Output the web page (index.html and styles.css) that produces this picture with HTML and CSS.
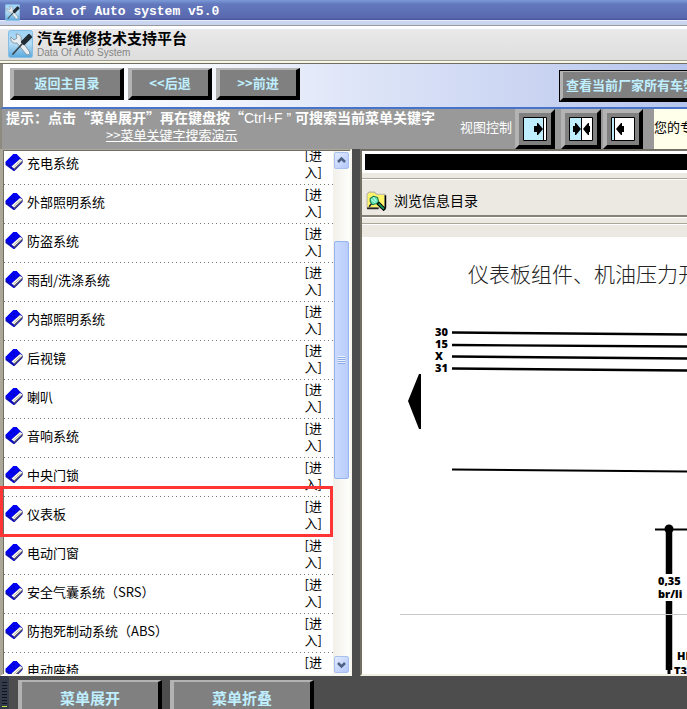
FILE: index.html
```
<!DOCTYPE html>
<html lang="zh-CN">
<head>
<meta charset="utf-8">
<title>Data of Auto system v5.0</title>
<link rel="stylesheet" href="styles.css">
</head>
<body>
<svg class="defs" aria-hidden="true">
  <defs>
    <linearGradient id="sky" x2="0" y2="1"><stop offset="0" stop-color="#9ed2f7"/><stop offset=".5" stop-color="#b5dcf5"/><stop offset="1" stop-color="#56a8de"/></linearGradient>
    <symbol id="tools" viewBox="0 0 25 28">
      <rect x=".5" y=".5" width="24" height="27" rx="2" fill="url(#sky)" stroke="#86bde2"/>
      <path d="M3 7l3 3 3-2-1-4c4 0 6 3 5 6l8 11c2 3-1 5-3 3L9 13C5 14 2 11 3 7z" fill="#e9eef2" stroke="#78858f" stroke-width=".8"/>
      <path d="M21 5l2 2-7 7-2-2z" fill="#222b33" stroke="#222b33" stroke-width="2.400" stroke-linejoin="round"/>
      <path d="M14 14L5 24" stroke="#3c4850" stroke-width="1.800" stroke-linecap="round"/>
    </symbol>
    <symbol id="book" viewBox="0 0 18 18">
      <path d="M0 8L8 0h3l3 3 3 3v3l-8 8H8l-8-6z" fill="#0a0ac0"/>
      <path d="M0 8L8 0h3l3 4-8 8z" fill="#0000f8"/>
      <path d="M8 15l9-9v2l-8 8z" fill="#555"/>
      <path d="M6 12.500L14.500 5l2.500 1.500-8.500 8z" fill="#fffef0"/>
      <path d="M8 13l7-6" stroke="#a8a493" stroke-width=".8"/>
      <path d="M5 6h1M8 4h1M8 7h1" stroke="#000050"/>
    </symbol>
  </defs>
</svg>
<div class="titlebar"><svg class="title-icon" aria-hidden="true"><use href="#tools"/></svg><span>Data of Auto system v5.0</span></div>
<header class="brand">
  <svg class="brand-icon" aria-hidden="true"><use href="#tools"/></svg>
  <div><h1>汽车维修技术支持平台</h1><p>Data Of Auto System</p></div>
</header>
<nav class="toolbar">
  <button class="btn home">返回主目录</button>
  <button class="btn step">&lt;&lt;后退</button>
  <button class="btn step">&gt;&gt;前进</button>
  <div class="toolbar-end"><button class="btn all">查看当前厂家所有车型</button></div>
</nav>
<section class="hints">
  <div class="tip">
    <p>提示：点击“菜单展开”再在键盘按“<span class="key">Ctrl+F ” </span>可搜索当前菜单关键字</p>
    <a href="#">&gt;&gt;菜单关键字搜索演示</a>
  </div>
  <span class="view-label">视图控制</span>
  <div class="views">
    <button class="view first" aria-label="展开左栏"><svg viewBox="0 0 24 24"><path d="M.5.5h23v23H.5z" fill="#fff"/><path d="M1 1h19v22H1z" fill="#bfefff"/><path d="M20.500 0v24" stroke="#000"/><path d="M.5.5h23v23H.5z" fill="none" stroke="#000"/><path d="M11 9h3V6h1l5 6-5 6h-1v-3h-3z"/></svg></button>
    <button class="view" aria-label="平分"><svg viewBox="0 0 24 24"><path d="M.5.5h23v23H.5z" fill="#fff"/><path d="M1 1h11v22H1z" fill="#bfefff"/><path d="M12.500 0v24" stroke="#000"/><path d="M.5.5h23v23H.5z" fill="none" stroke="#000"/><path d="M4 9h2V6h1l5 6-5 6H6v-3H4zM21 9h-1V6h-1l-5 6 5 6h1v-3h1z"/></svg></button>
    <button class="view" aria-label="展开右栏"><svg viewBox="0 0 24 24"><path d="M.5.5h23v23H.5z" fill="#fff"/><path d="M1 1h3v22H1z" fill="#bfefff"/><path d="M3.500 0v24" stroke="#000"/><path d="M.5.5h23v23H.5z" fill="none" stroke="#000"/><path d="M13 9h-2V6h-1l-5 6 5 6h1v-3h2z"/></svg></button>
  </div>
  <div class="notice">您的专</div>
</section>
<main class="work">
  <aside class="menu">
    <div class="menu-view">
      <ul>
        <li><svg><use href="#book"/></svg><span>充电系统</span><a href="#">[进入]</a></li>
        <li><svg><use href="#book"/></svg><span>外部照明系统</span><a href="#">[进入]</a></li>
        <li><svg><use href="#book"/></svg><span>防盗系统</span><a href="#">[进入]</a></li>
        <li><svg><use href="#book"/></svg><span>雨刮/洗涤系统</span><a href="#">[进入]</a></li>
        <li><svg><use href="#book"/></svg><span>内部照明系统</span><a href="#">[进入]</a></li>
        <li><svg><use href="#book"/></svg><span>后视镜</span><a href="#">[进入]</a></li>
        <li><svg><use href="#book"/></svg><span>喇叭</span><a href="#">[进入]</a></li>
        <li><svg><use href="#book"/></svg><span>音响系统</span><a href="#">[进入]</a></li>
        <li><svg><use href="#book"/></svg><span>中央门锁</span><a href="#">[进入]</a></li>
        <li><svg><use href="#book"/></svg><span>仪表板</span><a href="#">[进入]</a></li>
        <li><svg><use href="#book"/></svg><span>电动门窗</span><a href="#">[进入]</a></li>
        <li><svg><use href="#book"/></svg><span>安全气囊系统（SRS）</span><a href="#">[进入]</a></li>
        <li><svg><use href="#book"/></svg><span>防抱死制动系统（ABS）</span><a href="#">[进入]</a></li>
        <li><svg><use href="#book"/></svg><span>电动座椅</span><a href="#">[进入]</a></li>
      </ul>
    </div>
    <div class="scroll">
      <button aria-label="向上滚动"><svg viewBox="0 0 13 15"><path d="M3 9l3.500-3.500L10 9" fill="none" stroke="#4d6185" stroke-width="2.500"/></svg></button>
      <div class="track"><div class="thumb"><span class="grip"></span></div></div>
      <button aria-label="向下滚动"><svg viewBox="0 0 13 15"><path d="M3 6l3.500 3.500L10 6" fill="none" stroke="#4d6185" stroke-width="2.500"/></svg></button>
    </div>
    <div class="marker"></div>
  </aside>
  <article class="info">
    <div class="blackbar"></div>
    <div class="strip"></div>
    <header class="info-head">
      <svg viewBox="0 0 20 20" aria-hidden="true"><path d="M1 17V4l2-2h5l2 2h8v13z" fill="#fff46a" stroke="#b8b4a4"/><path d="M18.500 5v12" stroke="#000" stroke-width="1.500"/><path d="M1 17.500h11M3 16l3-4" stroke="#222" stroke-width="1.500"/><path d="M11 12l7 7" stroke="#000" stroke-width="3.500"/><path d="M12 13l5 5" stroke="#17a560" stroke-width="1.500"/><path d="M4 8l3-2 4 1 1 4-2 2-4 1-2-3z" fill="#65e5ad" stroke="#187050"/><path d="M7 7l3 4M5 9l4 3" stroke="#b9fff1"/></svg>
      <h2>浏览信息目录</h2>
    </header>
    <div class="strip thin"></div>
    <div class="sheet">
      <h3>仪表板组件、机油压力开关</h3>
      <svg class="wiring" width="325" height="374" viewBox="362 300 325 374" role="img" aria-label="电路图">
        <g stroke="#000" fill="none">
          <path d="M452 332.500L687 334.500M452 345L687 346.500M452 356.500L687 358.500M452 368.500L687 370.500" stroke-width="2.400"/>
          <path d="M452 469.500L687 471.500" stroke-width="1.900"/>
          <path d="M655 529.500H687" stroke-width="2"/>
          <path d="M669 530V574M669 601V670" stroke-width="6.500"/>
          <path d="M669 668V674" stroke-width="3"/>
          <path d="M400 614.500H687" stroke="#c8c8c8"/>
        </g>
        <path d="M408 401L419 374h2v55h-2z"/>
        <circle cx="669" cy="529" r="4.500"/>
        <g class="tag">
          <text x="435" y="336">30</text><text x="435" y="348">15</text><text x="435" y="360">X</text><text x="435" y="372">31</text>
          <text x="658" y="585">0,35</text><text x="658" y="598">br/li</text><text x="677" y="660">HI</text><text x="674" y="675">T3</text>
        </g>
      </svg>
    </div>
  </article>
</main>
<footer class="bottom">
  <div class="meter"><i></i></div>
  <button class="btn big">菜单展开</button>
  <button class="btn big">菜单折叠</button>
</footer>
</body>
</html>
```
FILE: styles.css
```
* { box-sizing: border-box; }
body, h1, h2, h3, p, ul { margin: 0; padding: 0; }
body {
  display: flex;
  flex-direction: column;
  height: 100vh;
  overflow: hidden;
  background: #4d4d4d;
  color: #000;
  font: 13px/18px "Noto Sans CJK SC", sans-serif;
}
button { margin: 0; padding: 0; font: inherit; }
.defs { position: absolute; width: 0; height: 0; }

.titlebar {
  flex: none;
  display: flex;
  align-items: center;
  gap: 12px;
  height: 26px;
  padding: 0 5px 2px;
  background: linear-gradient(#7d9bd8 0, #6379bd 4px, #5968ae 18px, #44539b 20px, #fff 20px, #ccd6f2 21px, #c8d4ee 25px, #999 25px);
  color: #fff;
  font: bold 13px/20px "Liberation Mono", monospace;
}
.title-icon { width: 15px; height: 17px; }

.brand {
  flex: none;
  display: flex;
  align-items: center;
  gap: 4px;
  height: 38px;
  padding: 0 8px 2px;
  background: linear-gradient(#fff 0, #fff 3px, #e9e9e9 3px, #dedede 34px, #a19e90 34px, #a19e90 35px, #fffff0 35px, #f0efdf 37px, #716f64 37px);
}
.brand-icon { flex: none; width: 25px; height: 28px; }
.brand h1 { font-size: 15px; line-height: 18px; font-weight: bold; }
.brand p { color: #858585; font: 10px/12px "Liberation Sans", sans-serif; }

.toolbar {
  flex: none;
  display: flex;
  align-items: flex-start;
  gap: 4px;
  height: 45px;
  padding: 4px 0 0 7px;
  border-left: 3px solid #8d8b80;
  border-bottom: 2px solid #4774c8;
  background: linear-gradient(90deg, #fff, #f4f6fd 30%, #dfe6f8 50%, #c8d3f1 80%, #b6c5ed);
}
.btn {
  height: 32px;
  border: solid;
  border-width: 2px 4px 4px 4px;
  border-color: #b3b3b3 #000 #000 #b3b3b3;
  background: #808080;
  color: #bfefff;
  font-weight: bold;
  line-height: 22px;
  white-space: nowrap;
}
.home { width: 114px; }
.step { width: 84px; }
.toolbar-end { width: 128px; margin: 2px 0 0 auto; overflow: hidden; }
.all { height: 32px; padding: 0 3px; outline: 1px solid #000; outline-offset: -1px; }

.hints {
  flex: none;
  display: flex;
  height: 40px;
  border-left: 2px solid #8d8b80;
  background: #999;
  color: #fff;
}
.tip { flex: 1; padding-left: 4px; white-space: nowrap; }
.tip p { font-size: 14px; line-height: 16px; font-weight: bold; }
.tip a { margin-left: 100px; color: #fff; line-height: 16px; }
.key { font-family: "Liberation Sans", sans-serif; font-weight: normal; }
.view-label { line-height: 36px; margin-right: 3px; }
.views { display: flex; gap: 2px; margin-right: 11px; }
.view {
  display: grid;
  place-items: center;
  width: 40px;
  height: 40px;
  border: solid 4px;
  border-color: #b3b3b3 #000 #000 #b3b3b3;
  background: #808080;
}
.view.first { margin-right: 4px; }
.view svg { width: 24px; height: 24px; }
.notice { width: 33px; overflow: hidden; background: #ffffea; color: #000; line-height: 36px; white-space: nowrap; }

.work { flex: 1; min-height: 0; display: flex; gap: 8px; }
.menu {
  position: relative;
  display: flex;
  width: 352px;
  border: solid #aca899;
  border-width: 1px 2px 2px 3px;
  border-right-color: #f8f7ef;
  border-bottom-color: #f8f7ef;
  background: #fff;
}
.menu-view {
  flex: 1;
  overflow: hidden;
  border: solid #716f64;
  border-width: 1px 0 0 1px;
}
.menu ul { margin-top: -5px; list-style: none; }
.menu li {
  display: flex;
  align-items: center;
  height: 39px;
  padding: 0 11px 6px 1px;
  background: repeating-linear-gradient(90deg, #777 0 1px, transparent 1px 4px) bottom / 100% 1px no-repeat;
}
.menu li svg { flex: none; width: 19px; height: 18px; }
.menu li span { flex: 1; padding-left: 3px; }
.menu li a { width: 20px; color: #000; text-align: right; text-decoration: none; line-height: 17px; word-break: break-all; }
.scroll {
  display: flex;
  flex-direction: column;
  width: 17px;
  padding: 1px;
  border-top: 1px solid #716f64;
  background: linear-gradient(90deg, #f1f0ea, #fefefb);
}
.scroll button {
  width: 15px;
  height: 17px;
  border: 1px solid #a8c0f0;
  border-radius: 2px;
  background: linear-gradient(135deg, #e1eaff, #b3c8fa);
}
.scroll button svg { display: block; width: 13px; height: 15px; }
.track { flex: 1; display: grid; grid-template-rows: 72fr 239fr 177fr; }
.thumb {
  grid-row: 2;
  display: grid;
  place-items: center;
  border: 1px solid #98b4ef;
  border-radius: 2px;
  background: linear-gradient(90deg, #cbdafd, #b9cdfb);
}
.grip { width: 7px; height: 8px; background: repeating-linear-gradient(#eef4ff 0 1px, #8caaeb 1px 2px); }
.marker {
  position: absolute;
  top: 336px;
  left: -3px;
  width: 333px;
  height: 51px;
  border: 3px solid #ff3535;
}

.info {
  flex: 1;
  display: flex;
  flex-direction: column;
  min-width: 0;
  overflow: hidden;
  border: solid #716f64;
  border-width: 2px 0 0 2px;
  border-bottom: 2px solid #f1efe2;
  background: #fff;
}
.blackbar { flex: none; height: 16px; margin: 3px 0 3px 3px; background: #000; }
.strip { flex: none; height: 7px; border-bottom: 1px solid #fff; background: linear-gradient(#ece9e3 5px, #aaa79b 5px); }
.info-head {
  flex: none;
  display: flex;
  align-items: center;
  gap: 7px;
  height: 37px;
  padding: 5px 4px 0;
  border-bottom: 2px solid #858277;
  background: #ece9e3;
}
.info-head svg { width: 21px; height: 21px; }
.info-head h2 { font-size: 14px; font-weight: normal; line-height: 20px; }
.thin { border-top: 1px solid #fff; height: 8px; }
.sheet { flex: 1; border-top: 12px solid #ece9e3; overflow: hidden; }
.sheet h3 {
  padding: 20px 0 11px 106px;
  color: #222;
  font-size: 21px;
  font-weight: 300;
  line-height: 32px;
  white-space: nowrap;
}
.wiring { display: block; }
.tag { font: 900 11px "Open Sans", sans-serif; }

.bottom { flex: none; display: flex; gap: 8px; height: 33px; padding-top: 4px; overflow: hidden; }
.meter {
  width: 9px;
  height: 36px;
  margin: -5px 1px 0 0;
  padding: 7px 2px 0;
  border-radius: 0 4px 0 0;
  background: #343a4a;
}
.meter i {
  display: block;
  height: 29px;
  background: repeating-linear-gradient(transparent 0 1px, #343a4a 1px 3px), linear-gradient(#11151f 23px, #b5e53b 23px);
}
.big { width: 144px; height: 38px; font-size: 15px; line-height: 28px; }
```
